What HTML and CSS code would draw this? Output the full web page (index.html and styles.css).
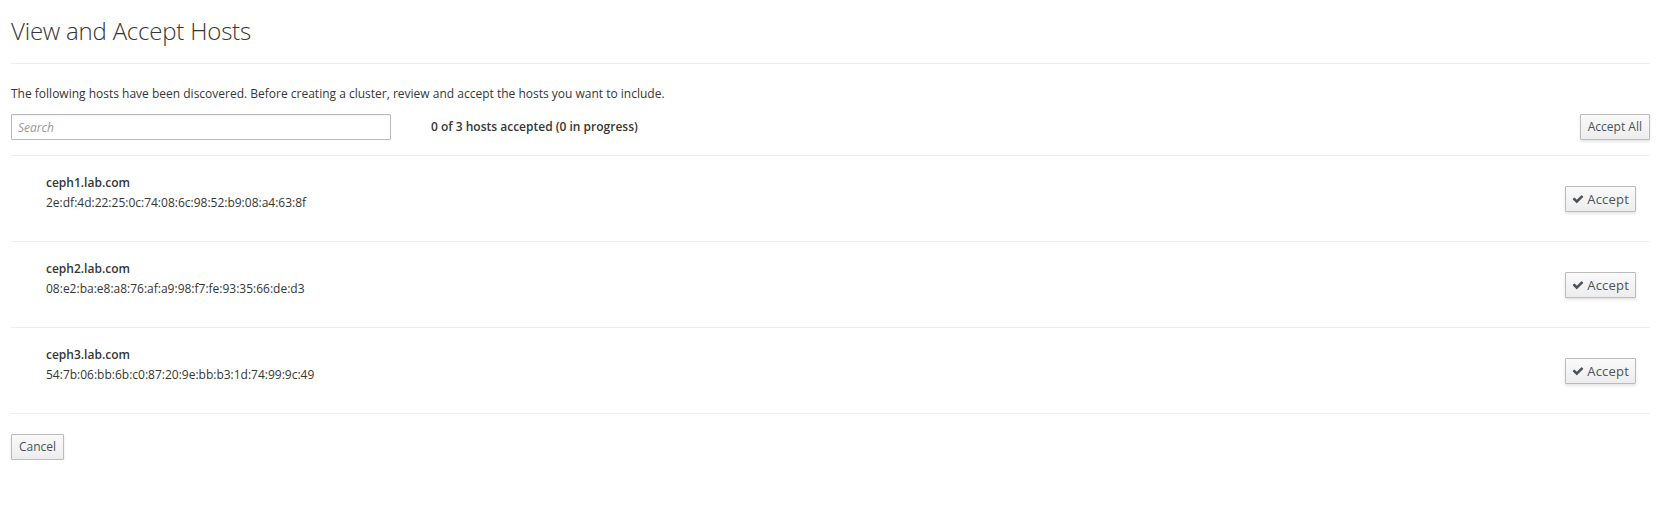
FILE: index.html
```html
<!DOCTYPE html>
<html>
<head>
<meta charset="utf-8">
<title>View and Accept Hosts</title>
<link rel="stylesheet" href="styles.css">
</head>
<body>
<div class="page">
  <div class="header">
    <h1 class="title">View and Accept Hosts</h1>
  </div>
  <p class="intro">The following hosts have been discovered. Before creating a cluster, review and accept the hosts you want to include.</p>
  <div class="toolbar">
    <input class="search" type="text" placeholder="Search">
    <span class="status">0 of 3 hosts accepted (0 in progress)</span>
    <button class="btn btn-all">Accept All</button>
  </div>
  <div class="list">
    <div class="row">
      <div class="host">
        <div class="name">ceph1.lab.com</div>
        <div class="mac">2e:df:4d:22:25:0c:74:08:6c:98:52:b9:08:a4:63:8f</div>
      </div>
      <button class="btn btn-accept"><svg class="check" viewBox="0 0 1792 1792"><path d="M1671 566q0 40-28 68l-724 724-136 136q-28 28-68 28t-68-28l-136-136-362-362q-28-28-28-68t28-68l136-136q28-28 68-28t68 28l294 295 656-657q28-28 68-28t68 28l136 136q28 28 28 68z"/></svg>Accept</button>
    </div>
    <div class="row">
      <div class="host">
        <div class="name">ceph2.lab.com</div>
        <div class="mac">08:e2:ba:e8:a8:76:af:a9:98:f7:fe:93:35:66:de:d3</div>
      </div>
      <button class="btn btn-accept"><svg class="check" viewBox="0 0 1792 1792"><path d="M1671 566q0 40-28 68l-724 724-136 136q-28 28-68 28t-68-28l-136-136-362-362q-28-28-28-68t28-68l136-136q28-28 68-28t68 28l294 295 656-657q28-28 68-28t68 28l136 136q28 28 28 68z"/></svg>Accept</button>
    </div>
    <div class="row">
      <div class="host">
        <div class="name">ceph3.lab.com</div>
        <div class="mac">54:7b:06:bb:6b:c0:87:20:9e:bb:b3:1d:74:99:9c:49</div>
      </div>
      <button class="btn btn-accept"><svg class="check" viewBox="0 0 1792 1792"><path d="M1671 566q0 40-28 68l-724 724-136 136q-28 28-68 28t-68-28l-136-136-362-362q-28-28-28-68t28-68l136-136q28-28 68-28t68 28l294 295 656-657q28-28 68-28t68 28l136 136q28 28 28 68z"/></svg>Accept</button>
    </div>
  </div>
  <div class="footer">
    <button class="btn btn-cancel">Cancel</button>
  </div>
</div>
</body>
</html>
```

FILE: styles.css
```css
* { box-sizing: border-box; }
html, body { margin: 0; padding: 0; background: #fff; }
body {
  font-family: "Open Sans", "Liberation Sans", sans-serif;
  font-size: 12px;
  line-height: 20px;
  color: #363636;
}
.page {
  padding: 0 19px 0 11px;
}
.header {
  padding: 17px 0 18px;
  border-bottom: 1px solid #ededed;
}
.title {
  margin: 0;
  font-size: 24px;
  font-weight: 300;
  line-height: 28px;
  letter-spacing: -0.2px;
  color: #363636;
}
.intro {
  margin: 20px 0 0;
}
.toolbar {
  display: flex;
  align-items: center;
  margin-top: 10px;
  padding-bottom: 15px;
  border-bottom: 1px solid #ededed;
}
.search {
  width: 380px;
  height: 26px;
  margin: 0;
  padding: 2px 6px;
  border: 1px solid #bababa;
  border-radius: 1px;
  font-family: "Open Sans", "Liberation Sans", sans-serif;
  font-size: 12px;
  color: #363636;
  outline: none;
  box-shadow: inset 0 1px 1px rgba(3,3,3,0.05);
}
.search::placeholder {
  color: #999;
  font-style: italic;
}
.status {
  margin-left: 40px;
  font-weight: 600;
}
.btn {
  display: inline-flex;
  align-items: center;
  height: 26px;
  padding: 2px 7px;
  border: 1px solid #bbb;
  border-radius: 1px;
  background-color: #f1f1f1;
  background-image: linear-gradient(to bottom, #fafafa 0, #ededed 100%);
  box-shadow: 0 2px 3px rgba(3,3,3,0.1);
  font-family: "Open Sans", "Liberation Sans", sans-serif;
  font-size: 12px;
  line-height: 20px;
  color: #4d5258;
  cursor: pointer;
}
.btn-all {
  margin-left: auto;
}
.row {
  display: flex;
  justify-content: space-between;
  height: 86px;
  padding: 0 14px 0 35px;
  border-bottom: 1px solid #ededed;
}
.host {
  padding-top: 17px;
}
.name {
  font-weight: 600;
}
.btn-accept {
  align-self: center;
  margin-top: 1px;
  font-size: 13px;
  letter-spacing: 0.2px;
  padding: 2px 6px;
}
.check {
  width: 12px;
  height: 12px;
  fill: #4d5258;
  margin-right: 3px;
}
.footer {
  padding-top: 20px;
}
```
